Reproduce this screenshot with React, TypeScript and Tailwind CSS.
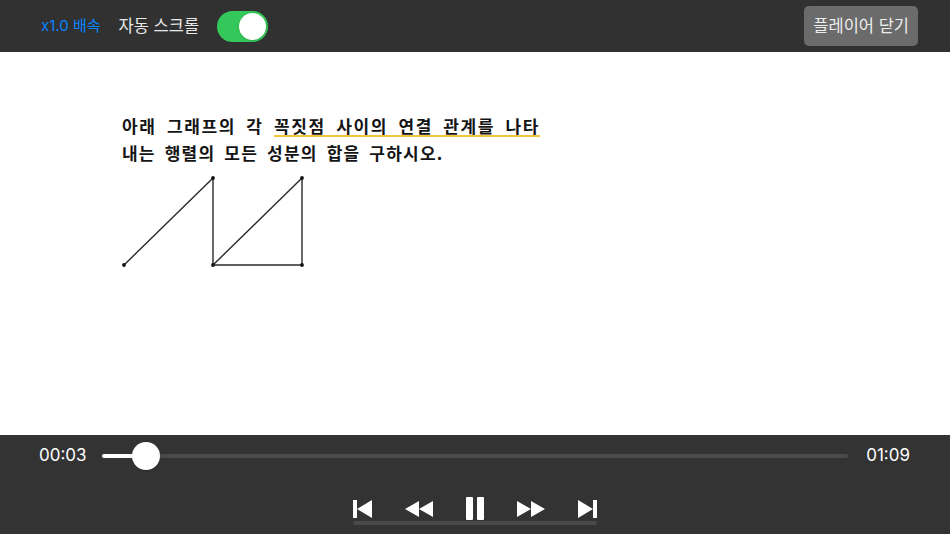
import React from 'react'

const ui = { fontFamily: 'Inter, "Noto Sans CJK KR", sans-serif' }
const doc = { fontFamily: '"Noto Sans CJK KR", "Noto Sans", sans-serif' }

function Toggle() {
  return (
    <div className="flex h-[31px] w-[51px] items-center justify-end rounded-full bg-[#34c759] p-[2px]">
      <div className="h-[27px] w-[27px] rounded-full bg-white shadow" />
    </div>
  )
}

function Graph() {
  const pts: [number, number][] = [
    [2, 94],
    [91, 7],
    [91, 94],
    [180, 7],
    [180, 94],
  ]
  const edges: [number, number][] = [
    [0, 1],
    [1, 2],
    [2, 3],
    [3, 4],
    [2, 4],
  ]
  return (
    <svg width="184" height="98" viewBox="0 0 184 98" className="mt-[5px] block">
      {edges.map(([a, b], i) => (
        <line
          key={i}
          x1={pts[a][0]}
          y1={pts[a][1]}
          x2={pts[b][0]}
          y2={pts[b][1]}
          stroke="#2a2a2a"
          strokeWidth="1.4"
        />
      ))}
      {pts.map(([x, y], i) => (
        <circle key={i} cx={x} cy={y} r="1.9" fill="#111" />
      ))}
    </svg>
  )
}

const SkipBack = () => (
  <svg width="19" height="18" viewBox="0 0 19 18">
    <rect x="0" y="0" width="4" height="18" fill="white" />
    <path d="M19 0 L19 18 L4 9 Z" fill="white" />
  </svg>
)

const Rewind = () => (
  <svg width="28" height="16" viewBox="0 0 28 16">
    <path d="M14 0 L14 16 L0 8 Z" fill="white" />
    <path d="M28 0 L28 16 L14 8 Z" fill="white" />
  </svg>
)

const Pause = () => (
  <svg width="18" height="23" viewBox="0 0 18 23">
    <rect x="0" y="0" width="7" height="23" rx="1" fill="white" />
    <rect x="11" y="0" width="7" height="23" rx="1" fill="white" />
  </svg>
)

const Forward = () => (
  <svg width="28" height="16" viewBox="0 0 28 16">
    <path d="M0 0 L0 16 L14 8 Z" fill="white" />
    <path d="M14 0 L14 16 L28 8 Z" fill="white" />
  </svg>
)

const SkipForward = () => (
  <svg width="19" height="18" viewBox="0 0 19 18">
    <path d="M0 0 L0 18 L15 9 Z" fill="white" />
    <rect x="15" y="0" width="4" height="18" fill="white" />
  </svg>
)

export default function App() {
  return (
    <div className="flex h-[534px] w-[950px] flex-col overflow-hidden bg-white" style={ui}>
      {/* top bar */}
      <div className="flex h-[52px] items-center bg-[#313131] pl-[41px] pr-[32px]">
        <span className="text-[15px] text-[#0a84ff]">x1.0 배속</span>
        <span className="ml-[18px] text-[16.5px] text-[#e8e8e8]">자동 스크롤</span>
        <div className="ml-[18px]">
          <Toggle />
        </div>
        <button className="ml-auto h-[40px] rounded-[5px] bg-[#6b6b6b] px-[9px] text-[16.5px] text-[#ededed]">
          플레이어 닫기
        </button>
      </div>

      {/* document */}
      <div className="flex-1 pl-[122px] pt-[60px]" style={doc}>
        <div className="text-[17px] font-bold leading-[27px] text-[#141414]">
          <p className="tracking-[1.6px] [word-spacing:5px]">
            아래 그래프의 각{' '}
            <span className="underline decoration-[#f3c33c] decoration-2 underline-offset-[2px]">
              꼭짓점 사이의 연결 관계를 나타
            </span>
          </p>
          <p className="tracking-[1.2px] [word-spacing:4px]">내는 행렬의 모든 성분의 합을 구하시오.</p>
        </div>
        <Graph />
      </div>

      {/* player */}
      <div className="flex h-[99px] flex-col bg-[#333333]">
        <div className="mt-[7px] flex h-[28px] items-center pl-[39px] pr-[40px]">
          <span className="w-[46px] text-[17px] text-white">00:03</span>
          <div className="relative ml-[17px] flex h-[28px] flex-1 items-center">
            <div className="h-[4px] w-full rounded-full bg-[#4a4a4a]" />
            <div className="absolute left-0 top-[12px] h-[4px] w-[44px] rounded-full bg-white" />
            <div className="absolute left-[30px] top-0 h-[28px] w-[28px] rounded-full bg-white shadow" />
          </div>
          <span className="ml-[18px] text-[17px] text-white">01:09</span>
        </div>
        <div className="mt-[27px] flex flex-col items-center">
          <div className="flex h-[23px] w-[244px] items-center justify-between">
            <SkipBack />
            <Rewind />
            <Pause />
            <Forward />
            <SkipForward />
          </div>
          <div className="mt-[1px] h-[4px] w-[244px] rounded-full bg-[#4a4a4a]" />
        </div>
      </div>
    </div>
  )
}
